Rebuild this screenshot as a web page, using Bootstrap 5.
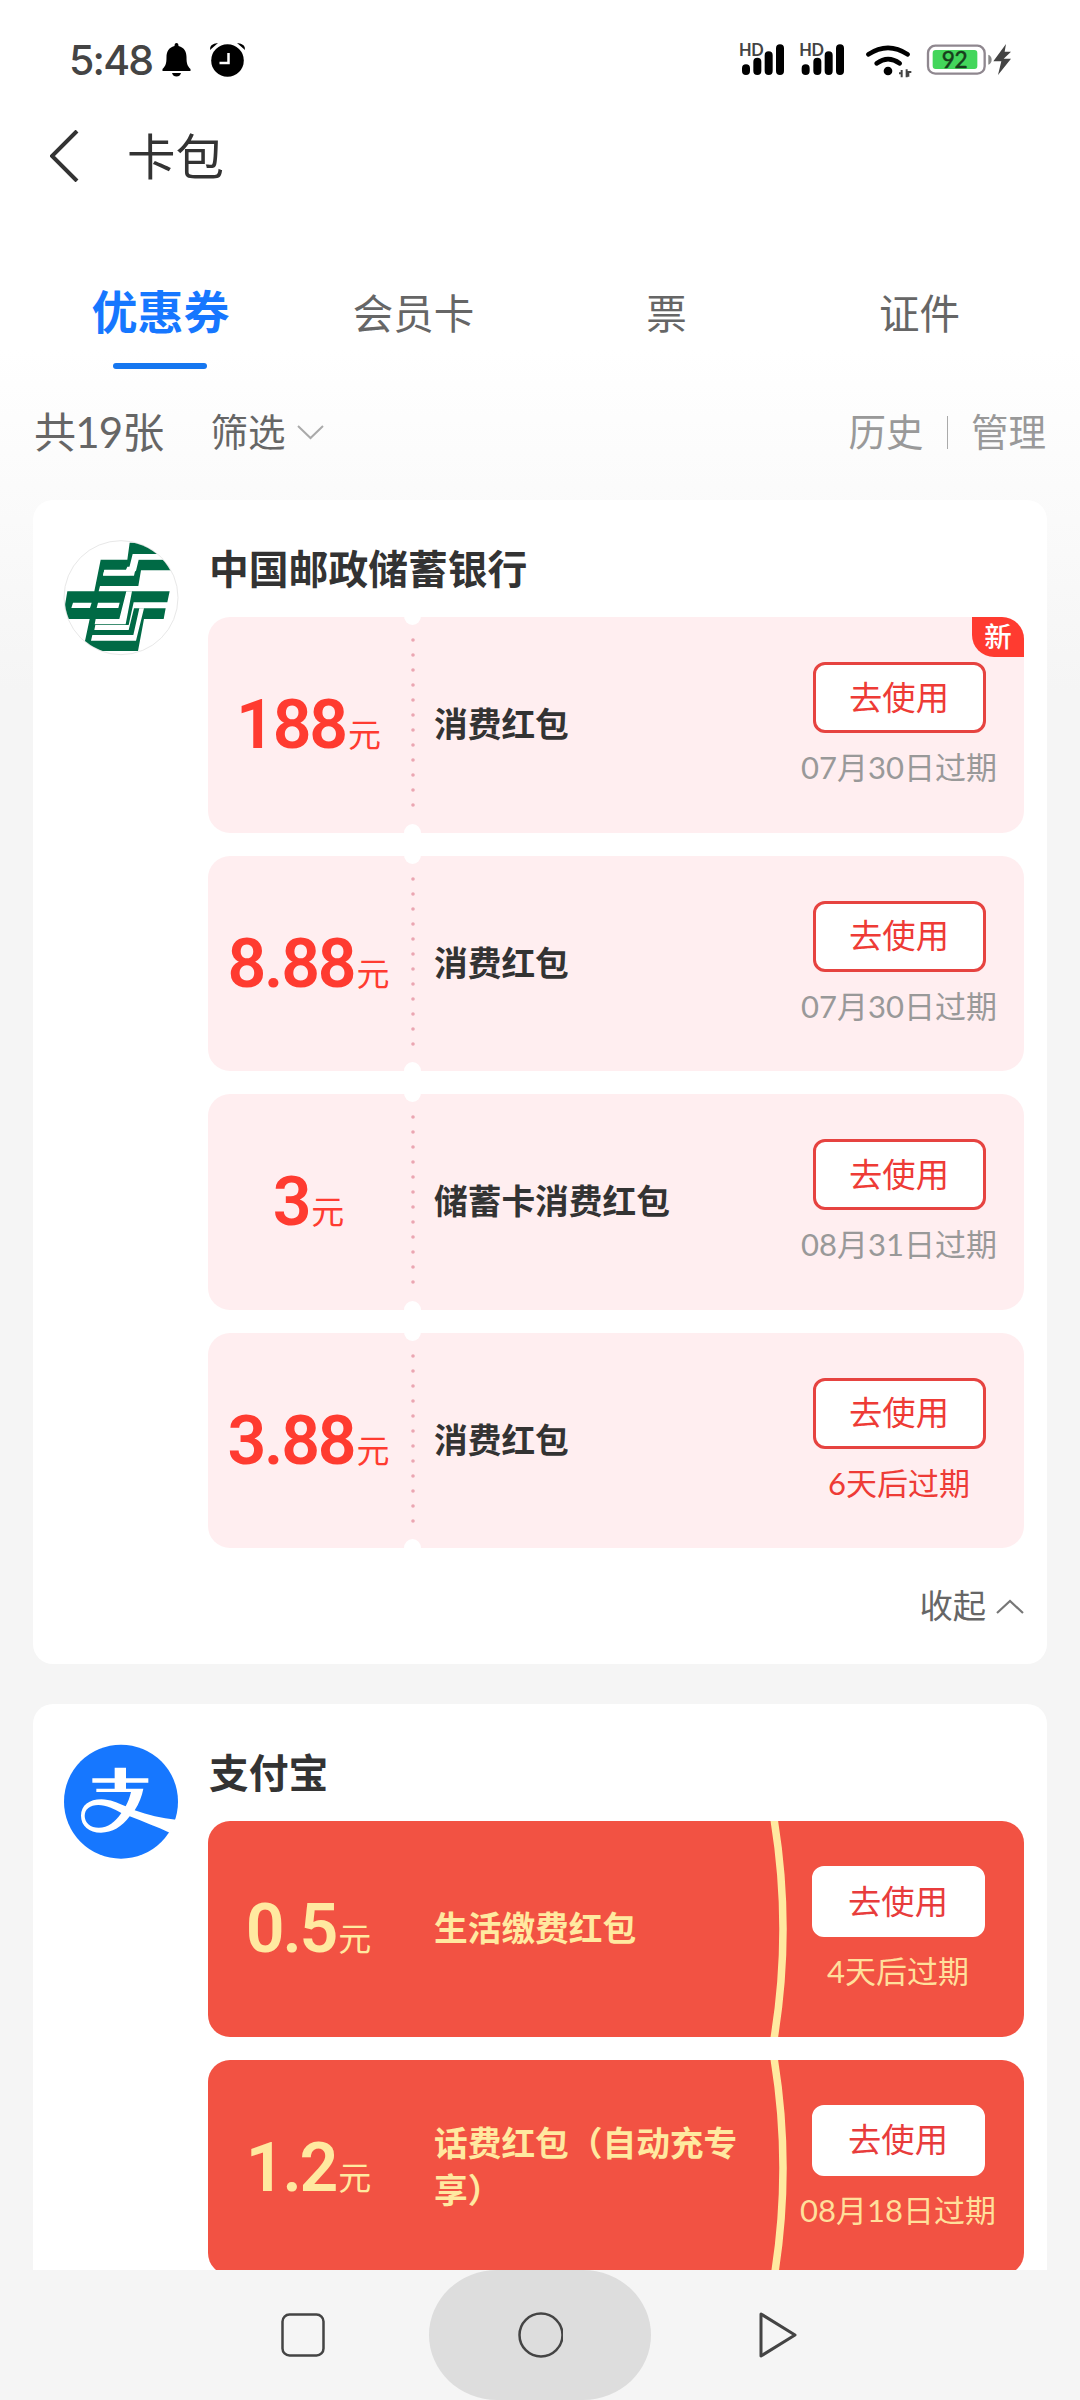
<!DOCTYPE html>
<html lang="zh-CN">
<head>
<meta charset="utf-8">
<meta name="viewport" content="width=device-width, initial-scale=1">
<title>卡包</title>
<link rel="stylesheet" href="https://cdn.jsdelivr.net/npm/bootstrap@5.3.0/dist/css/bootstrap.min.css">
<style>
body{font-family:Lato,"Noto Sans CJK SC",sans-serif;color:#333;line-height:1;background:#f5f5f5}
svg{display:block;flex:none}
.screen{width:1080px;height:2400px;background:linear-gradient(#fff 350px,#f5f5f5 690px)}
.statusbar{height:90px;padding:30px 65px 0 69px}
.statusbar svg{margin-top:12px}
.statusbar .status-icons{margin-top:8px}
.clock-text{font:500 41px/60px Inter,sans-serif;letter-spacing:-1.8px;color:#444;width:91px}
.titlebar{height:132px;padding:0 50px 0 50px}
.page-title{font-size:48.5px;line-height:60px;margin-left:47px}
.tabs{height:182px;padding:0 34px 0 34px}
.tabs .nav-link{font-size:40.5px;line-height:60px;color:#666;padding:62px 0 0;height:150px}
.tabs .nav-link.active{font-size:46px;font-weight:700;color:#1677ff;position:relative;background:none;padding-top:60px}
.tabs .nav-link.active::after{content:"";position:absolute;left:50%;bottom:3px;width:94px;height:6px;margin-left:-48px;border-radius:3px;background:#1677f0}
.filterbar{height:96px;padding:0 34px 40px 34px}
.total{font-size:42px;letter-spacing:-.8px;color:#666;margin-right:47px}
.filter-text{font-size:37.5px;color:#666;margin-right:11px}
.tool-text{font-size:37.5px;color:#999}
.tool-sep{width:1.5px;height:33px;background:#aaa;margin:0 23px}
.shop{border-radius:20px;padding:41px 23px 0 31px;background:#fff;margin:0 33px 40px;width:1014px}
.shop-last{margin-bottom:0;border-radius:20px 20px 0 0;height:566px}
.shop-logo{margin-left:-8px;margin-top:-11px;width:130px;height:130px}
.shop-name{font-size:39.8px;font-weight:600;line-height:48px;height:76px;padding-top:4px;padding-left:1px}
.coupons{width:816px;gap:23px}
.coupon{height:215.5px;border-radius:22px;background:#ffeef0;position:relative;flex:none}
.coupon-pink::before,.coupon-pink::after{content:"";position:absolute;left:196px;width:17px;height:18px;border-radius:50%;background:#fff}
.coupon-pink::before{top:-10px}
.coupon-pink::after{bottom:-9px}
.perforation{position:absolute;left:202.5px;top:16px}
.amount{width:204px;color:#ff3b30;padding-right:3px;padding-top:1px}
.amount b{font:600 68px/80px Roboto,sans-serif;letter-spacing:-2.2px}
.amount span{font-size:33px;margin-left:2px;position:relative;top:-1px}
.coupon-name{width:312px;margin-left:22px;font-size:33.7px;font-weight:600;line-height:47px}
.action{width:196px;margin-left:55px;padding-top:45px}
.btn-use{width:173px;height:71px;font-size:33.3px;line-height:1;padding:0;border:3px solid #e64340;border-radius:12px;background:#fff;color:#ee3b36}
.expire{font-size:31px;color:#999;line-height:40px;margin-top:14px;white-space:nowrap}
.expire.soon{color:#ee3b36}
.tag-new{position:absolute;right:0;top:0;width:52px;height:40px;background:#ff3b30;color:#fff;font-size:27.5px;font-weight:500;line-height:39px;text-align:center;border-radius:0 22px 0 22px}
.coupon-red{background:#f25243}
.coupon-red .amount,.coupon-red .coupon-name{color:#ffe9a0}
.coupon-red .expire{color:#ffdf9b}
.coupon-red .btn-use{border-color:#fff;color:#e83c3c}
.coupon-red .action{margin-left:54px}
.arc{position:absolute;left:555px;top:0}
.collapse-row{height:116px;font-size:33.3px;color:#666;gap:10px}
.sysnav{height:130px;background:#f5f5f5;padding-right:2px}
.home-pill{width:222px;height:130px;border-radius:68px / 65px;background:#ddd;margin:0 108px 0 104px}
</style>
</head>
<body>
<div class="screen d-flex flex-column overflow-hidden mx-auto">
  <header class="statusbar d-flex align-items-start">
    <span class="clock-text text-nowrap">5:48</span>
    <svg width="90" height="36" viewBox="160 42 90 36">
      <path d="M176.500 43q2 0 2 3c6 1.500 8 6 8 11 0 7 1 9 4 12v2h-28v-2c3-3 4-5 4-12 0-5 2-9.500 8-11q0-3 2-3z"/><path d="M172 73h9q-1 3.500-4.500 3.500T172 73z"/>
      <circle cx="227.500" cy="60.500" r="16.300"/><path d="M228.500 53v10h-9" fill="none" stroke="#fff" stroke-width="2.500"/>
      <path d="M210 50q-1-6 8-7z M245 50q1-6-8-7z"/>
    </svg>
    <svg class="status-icons ms-auto" width="280" height="42" viewBox="105 52 840 126">
      <g fill="none" stroke="#000" stroke-width="24" stroke-linecap="round">
        <path d="M138 143v8M172 123v28M206 104v47M240 83v68M317 143v8M352 123v28M386 104v47M420 83v68"/>
        <path d="M505 101q59-39 118 0M530 128q34-25 69 0" stroke-width="14"/>
      </g>
      <g font-family="Lato" font-weight="700" font-size="49" fill="#444" stroke="#fff" stroke-width="3" paint-order="stroke"><text x="117" y="105" textLength="74">HD</text><text x="298" y="105" textLength="74">HD</text></g>
      <circle cx="564" cy="151" r="13"/>
      <path d="M597 158h8v12M605 148v22M620 170v-24M620 154h14M625 154v14" fill="none" stroke="#444" stroke-width="6"/>
      <rect x="684" y="75" width="170" height="84" rx="22" fill="#fff" stroke="#8f878f" stroke-width="7"/>
      <rect x="698" y="88" width="134" height="57" rx="9" fill="#43d65b"/>
      <path d="M865 102q10 4 10 15t-10 15z" fill="#888"/>
      <text x="725" y="143" font-family="Lato" font-size="68" fill="#173d1c" stroke="#173d1c" stroke-width="1.500" textLength="78">92</text>
      <path d="M918 70l-38 52h24l-10 41 39-49h-22l22-21h-19z" fill="#444"/>
    </svg>
  </header>
  <div class="titlebar d-flex align-items-center">
    <svg width="30" height="52" viewBox="0 0 30 52"><path d="M27 1L2 26l25 25" fill="none" stroke="#333" stroke-width="4"/></svg>
    <h1 class="page-title fw-normal mb-0">卡包</h1>
  </div>
  <nav class="tabs nav nav-justified flex-nowrap">
    <a class="nav-link active" href="#">优惠券</a>
    <a class="nav-link" href="#">会员卡</a>
    <a class="nav-link" href="#">票</a>
    <a class="nav-link" href="#">证件</a>
  </nav>
  <div class="filterbar d-flex align-items-center">
    <span class="total">共19张</span>
    <span class="filter-text">筛选</span>
    <svg width="27" height="15" viewBox="0 0 27 15"><path d="M1 1l12.500 12L26 1" fill="none" stroke="#aaa" stroke-width="2"/></svg>
    <span class="tool-text ms-auto">历史</span><span class="tool-sep"></span><span class="tool-text">管理</span>
  </div>
  <main class="flex-fill overflow-hidden">
    <section class="shop d-flex justify-content-between">
      <svg class="shop-logo" viewBox="0 0 390 390">
        <defs><clipPath id="disc"><circle cx="195" cy="203" r="169"/></clipPath></defs>
        <circle cx="195" cy="203" r="171" fill="#fff" stroke="#e8e8e8" stroke-width="3"/>
        <g clip-path="url(#disc)">
          <path fill="#006a45" d="M221 38H310V72H232L224 110H214L210 119H145L141 136H220L240 122L248 89H360V121H255L247 168H132L128 184H341L334 217H233L218 285H118L115 300H218L234 235H329L323 267H264L246 363H60L87 333L101 267H20L34 184H115L134 89H214z"/>
          <path fill="#fff" d="M230 72H340V88H245L234 137H141L145 120H218z M51 218H107L102 234H46z M126 218H191L187 234H122z M211 184H228L209 283H116L119 267H190z M250 235H264L240 332H105L109 315H232z"/>
        </g>
      </svg>
      <div class="coupons-wrap">
        <h2 class="shop-name mb-0">中国邮政储蓄银行</h2>
        <div class="coupons d-flex flex-column">
          <article class="coupon coupon-pink d-flex align-items-center">
            <svg class="perforation" width="4" height="184"><path d="M2 7v174" stroke="#eba6b2" stroke-width="3.600" stroke-linecap="round" stroke-dasharray="0 15"/></svg>
            <div class="amount text-center text-nowrap"><b>188</b><span>元</span></div><div class="coupon-name">消费红包</div>
            <div class="action align-self-start d-flex flex-column align-items-center"><button class="btn btn-use">去使用</button><div class="expire">07月30日过期</div></div>
            <span class="tag-new">新</span>
          </article>
          <article class="coupon coupon-pink d-flex align-items-center">
            <svg class="perforation" width="4" height="184"><path d="M2 7v174" stroke="#eba6b2" stroke-width="3.600" stroke-linecap="round" stroke-dasharray="0 15"/></svg>
            <div class="amount text-center text-nowrap"><b>8.88</b><span>元</span></div><div class="coupon-name">消费红包</div>
            <div class="action align-self-start d-flex flex-column align-items-center"><button class="btn btn-use">去使用</button><div class="expire">07月30日过期</div></div>
          </article>
          <article class="coupon coupon-pink d-flex align-items-center">
            <svg class="perforation" width="4" height="184"><path d="M2 7v174" stroke="#eba6b2" stroke-width="3.600" stroke-linecap="round" stroke-dasharray="0 15"/></svg>
            <div class="amount text-center text-nowrap"><b>3</b><span>元</span></div><div class="coupon-name">储蓄卡消费红包</div>
            <div class="action align-self-start d-flex flex-column align-items-center"><button class="btn btn-use">去使用</button><div class="expire">08月31日过期</div></div>
          </article>
          <article class="coupon coupon-pink d-flex align-items-center">
            <svg class="perforation" width="4" height="184"><path d="M2 7v174" stroke="#eba6b2" stroke-width="3.600" stroke-linecap="round" stroke-dasharray="0 15"/></svg>
            <div class="amount text-center text-nowrap"><b>3.88</b><span>元</span></div><div class="coupon-name">消费红包</div>
            <div class="action align-self-start d-flex flex-column align-items-center"><button class="btn btn-use">去使用</button><div class="expire soon">6天后过期</div></div>
          </article>
        </div>
        <div class="collapse-row d-flex align-items-center justify-content-end">收起
          <svg width="28" height="15" viewBox="0 0 28 15"><path d="M1 14L14 2l13 12" fill="none" stroke="#777" stroke-width="2.200"/></svg>
        </div>
      </div>
    </section>
    <section class="shop shop-last d-flex justify-content-between">
      <svg class="shop-logo" viewBox="0 0 390 390">
        <circle cx="195" cy="203" r="171" fill="#1677ff"/>
        <g fill="#fff">
          <path d="M176 101H210V133H277V146H210V164H262C258 186 249 209 236 229C276 244 316 252 360 257Q353 280 341 296C303 279 259 262 221 247C198 279 168 296 135 296C99 296 75 275 75 245C75 214 100 196 136 196C163 196 184 207 209 217C216 204 221 191 225 174H121V164H176V146H109V133H176z"/>
        </g>
        <path fill="#1677ff" d="M196 237C174 225 151 213 127 213C102 213 86 226 86 245C86 267 104 281 128 281C156 281 178 264 196 237z"/>
      </svg>
      <div class="coupons-wrap">
        <h2 class="shop-name mb-0">支付宝</h2>
        <div class="coupons d-flex flex-column">
          <article class="coupon coupon-red d-flex align-items-center overflow-hidden">
            <svg class="arc" width="30" height="216"><path d="M11 -2Q29 108 11 218" fill="none" stroke="#ffe9a0" stroke-width="7.500"/></svg>
            <div class="amount text-center text-nowrap"><b>0.5</b><span>元</span></div><div class="coupon-name">生活缴费红包</div>
            <div class="action align-self-start d-flex flex-column align-items-center"><button class="btn btn-use">去使用</button><div class="expire">4天后过期</div></div>
          </article>
          <article class="coupon coupon-red d-flex align-items-center overflow-hidden">
            <svg class="arc" width="30" height="216"><path d="M11 -2Q29 108 11 218" fill="none" stroke="#ffe9a0" stroke-width="7.500"/></svg>
            <div class="amount text-center text-nowrap"><b>1.2</b><span>元</span></div><div class="coupon-name">话费红包（自动充专享）</div>
            <div class="action align-self-start d-flex flex-column align-items-center"><button class="btn btn-use">去使用</button><div class="expire">08月18日过期</div></div>
          </article>
        </div>
      </div>
    </section>
  </main>
  <footer class="sysnav d-flex align-items-center justify-content-center">
    <svg width="44" height="44" viewBox="0 0 44 44"><rect x="1.500" y="1.500" width="41" height="41" rx="7" fill="none" stroke="#444" stroke-width="2.500"/></svg>
    <div class="home-pill d-flex align-items-center justify-content-center"><svg width="46" height="46" viewBox="0 0 46 46"><circle cx="24" cy="23" r="21.500" fill="none" stroke="#444" stroke-width="2.500"/></svg></div>
    <svg width="38" height="46" viewBox="0 0 38 46"><path d="M2 2L36 23L2 44z" fill="none" stroke="#444" stroke-width="3" stroke-linejoin="round"/></svg>
  </footer>
</div>
<script src="https://cdn.jsdelivr.net/npm/bootstrap@5.3.0/dist/js/bootstrap.bundle.min.js"></script>
</body>
</html>
